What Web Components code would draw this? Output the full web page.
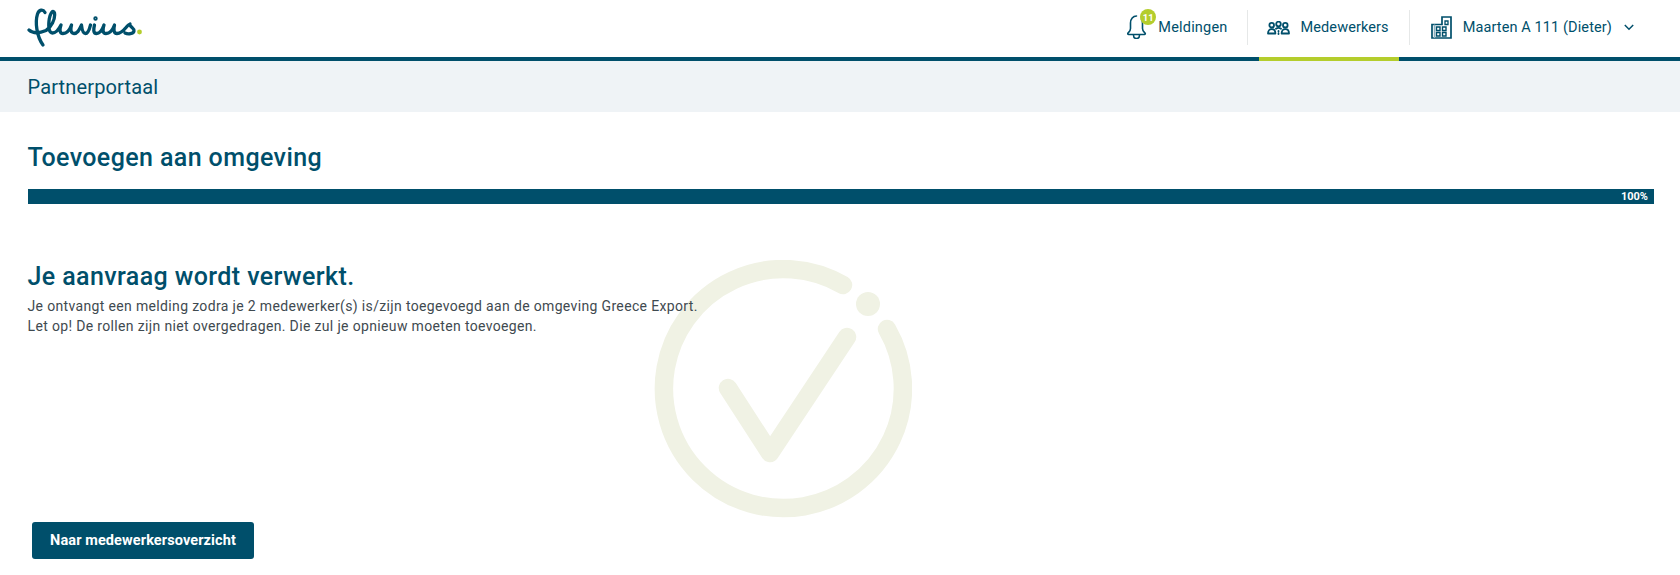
<!DOCTYPE html>
<html lang="nl"><head><meta charset="utf-8"><title>Partnerportaal</title>
<style>
html,body{margin:0;padding:0;background:#fff}
body{font-family:Roboto,"Liberation Sans",sans-serif;color:#3f4a50;height:575px;overflow:hidden;display:flex;flex-direction:column}
</style></head><body>
<fl-header>
  <fl-nav-item icon="bell" badge="11" class="first">Meldingen</fl-nav-item>
  <fl-nav-sep></fl-nav-sep>
  <fl-nav-item icon="people" active>Medewerkers</fl-nav-item>
  <fl-nav-sep></fl-nav-sep>
  <fl-nav-item icon="building" chevron>Maarten A 111 (Dieter)</fl-nav-item>
</fl-header>
<fl-subheader>Partnerportaal</fl-subheader>
<fl-page heading="Toevoegen aan omgeving">
  <fl-progress value="100"></fl-progress>
  <fl-result heading="Je aanvraag wordt verwerkt.">
    Je ontvangt een melding zodra je 2 medewerker(s) is/zijn toegevoegd aan de omgeving Greece Export.<br>
    Let op! De rollen zijn niet overgedragen. Die zul je opnieuw moeten toevoegen.
  </fl-result>
  <fl-button slot="actions">Naar medewerkersoverzicht</fl-button>
</fl-page>
<script>
const ICONS={
bell:`<svg width="20" height="24" viewBox="0 0 20 24" fill="none" stroke="#004f6b" stroke-width="1.600" stroke-linejoin="round" stroke-linecap="round"><path d="M9.500 1C6 1 3.500 4 3.500 8v5.500c0 2.500-1.500 3.500-2.500 4.500-.6.6-.2 1.500.6 1.500h15.800c.8 0 1.200-.9.6-1.500-1-1-2.500-2-2.500-4.500V8c0-1.500-.3-3-1-4"/><path d="M6.500 20c0 2.500 1.500 3.500 3 3.500s3-1 3-3.500"/></svg>`,
people:`<svg width="23" height="14" viewBox="0 0 23 14" fill="none" stroke="#004f6b" stroke-width="1.800" stroke-linecap="round" stroke-linejoin="round"><circle cx="4.700" cy="4.200" r="2.300"/><circle cx="11.500" cy="3" r="2.300"/><circle cx="18.300" cy="4.200" r="2.300"/><path d="M1 12.500c0-2.800 1.500-4.300 3.700-4.300s3.700 1.500 3.700 4.300H1zM14.600 12.500c0-2.800 1.500-4.300 3.700-4.300s3.700 1.500 3.700 4.300h-7.400zM9 7.700c.7-.5 1.500-.8 2.500-.8s1.800.3 2.500.8"/><path d="M11.500 10v3" stroke-dasharray=".5 2"/></svg>`,
building:`<svg width="21" height="23" viewBox="0 0 21 23" fill="none" stroke="#004f6b" stroke-width="1.700"><path d="M1 8.500h10V1h9v21H1z"/><path d="M3.500 8.500V22" stroke="#8fb0bf" stroke-width="1.500"/><path d="M14 5h3v3.500h-3z" stroke-width="1.300"/><path d="M5.500 11h3.500v3.500H5.500zM11.500 11H15v3.500h-3.500zM5.500 16.500h3.500V20H5.500zM11.500 16.500H15V20h-3.500z" stroke-width="1.400"/></svg>`
};
class Base extends HTMLElement{
  constructor(){super();this.attachShadow({mode:'open'})}
}
customElements.define('fl-logo',class extends Base{connectedCallback(){this.shadowRoot.innerHTML=`<style>:host{display:block;width:116px;height:40px;line-height:0}</style>
<svg width="116" height="40" viewBox="27 8 116 40" fill="none" stroke="#004f6b" stroke-width="3.300" stroke-linecap="round" stroke-linejoin="round">
<path d="M45 12.500C43 9 39 9.500 37.500 14 35 22 36.500 36 43 45"/>
<path d="M29 30c4 3.500 10 3.500 17 .5 5-3 9.500-11 8.500-17.500-1-3.500-4.500-1-5.500 8-.7 6.500 0 12 3.500 12C56.500 33 59 29 61 25 59.500 29.500 59.500 33.500 63 33.500 67 33.500 70 29 71.500 25 70.500 29 70.500 33.500 74 33.500 78 33.500 79.500 29 81.500 25 82 28 82 33.500 85.500 33.500 88 33.500 89.500 29 90.500 25"/>
<path d="M94.500 25C93.500 29 93 33.500 96.500 33.500 100 33.500 102.500 29 104 25 102.500 29.500 102.500 33.500 106 33.500 110 33.500 113 29 114.500 25 113.500 29.500 113.500 33.500 117 33.500 121 33.500 124 30 126 27.500 127.500 25.500 128.500 24.500 130 24 129 26.500 134.500 28 134 31 133.500 34 128 34.500 125 33"/>
<circle cx="95.500" cy="18.500" r=".9" stroke-width="2.600"/>
<circle cx="139.500" cy="32" r="2.400" fill="#b4cd2c" stroke="none"/>
</svg>`}});
customElements.define('fl-header',class extends Base{connectedCallback(){this.shadowRoot.innerHTML=`<style>
:host{display:flex;align-items:stretch;justify-content:space-between;height:57px;border-bottom:4px solid #004f6b;padding-left:27px;flex:none}
.logo{display:flex;align-items:flex-start;padding-top:8px}
nav{display:flex;align-items:stretch;padding-right:46px}
</style><div class="logo"><fl-logo></fl-logo></div><nav><slot></slot></nav>`}});
customElements.define('fl-nav-sep',class extends Base{connectedCallback(){this.shadowRoot.innerHTML=`<style>
:host{display:block;flex:none;width:1px;height:35px;margin:10px 11px 0 10px;background:#e6e8e8}
</style>`}});
customElements.define('fl-nav-item',class extends Base{connectedCallback(){
 const b=this.getAttribute('badge'),c=this.hasAttribute('chevron');
 this.shadowRoot.innerHTML=`<style>
:host{display:flex;align-items:center;height:61px;box-sizing:border-box;padding:0 10px 7px 8px;font-size:14.500px;letter-spacing:.2px;color:#004f6b}
:host([active]){border-bottom:4px solid #b4cd2c;padding-bottom:3px;letter-spacing:.1px}
:host([chevron]){padding:0 0 7px 10px;letter-spacing:.11px}
:host(.first){padding:0 9px 7px 0}
.ic{position:relative;display:flex;margin-right:11px;margin-top:1px}
:host(.first) .ic{margin-top:0}
.badge{position:absolute;left:13px;top:-6px;width:16px;height:16px;border-radius:50%;background:#b4cd2c;color:#fff;font-size:9.500px;font-weight:700;display:flex;align-items:center;justify-content:center;letter-spacing:0}
.chev{margin-left:12px;display:flex}
</style><span class="ic">${ICONS[this.getAttribute('icon')]}${b?`<span class="badge">${b}</span>`:''}</span><slot></slot>${c?`<span class="chev"><svg width="10" height="7" viewBox="0 0 10 7" fill="none" stroke="#004f6b" stroke-width="1.500"><path d="M.8 1l4.200 4.200L9.200 1"/></svg></span>`:''}`}});
customElements.define('fl-subheader',class extends Base{connectedCallback(){this.shadowRoot.innerHTML=`<style>
:host{display:flex;align-items:center;height:51px;padding-left:27.500px;background:#eff3f6;color:#004f6b;font-size:20px;letter-spacing:.15px;flex:none}
</style><slot></slot>`}});
customElements.define('fl-check',class extends Base{connectedCallback(){this.shadowRoot.innerHTML=`<style>
:host{position:absolute;left:654px;top:148px;width:258px;height:258px;line-height:0;z-index:0}
</style><svg width="258" height="258" viewBox="654 260 258 258" fill="none" stroke="#f0f2e4" stroke-width="18.500" stroke-linecap="round" stroke-linejoin="round"><path d="M843 285A119.500 119.500 0 1 0 887 329"/><path d="M728 388L770 453 847 337"/><circle cx="868" cy="304" r="12" fill="#f0f2e4" stroke="none"/></svg>`}});
customElements.define('fl-page',class extends Base{connectedCallback(){this.shadowRoot.innerHTML=`<style>
:host{display:flex;flex-direction:column;flex:1;position:relative;padding:0 26px 16px 28px;box-sizing:border-box}
h1{margin:30px 0 15px -.5px;font-size:25px;line-height:32px;font-weight:500;color:#004f6b;letter-spacing:.4px}
.main{flex:1;display:flex;flex-direction:column}
.actions{padding-left:4px}
</style><fl-check></fl-check><h1>${this.getAttribute('heading')}</h1><div class="main"><slot></slot></div><div class="actions"><slot name="actions"></slot></div>`}});
customElements.define('fl-progress',class extends Base{connectedCallback(){const v=this.getAttribute('value');this.shadowRoot.innerHTML=`<style>
:host{display:block;height:15px;background:#e6e8e8}
.bar{height:100%;width:${v}%;background:#004f6b;color:#fff;font-size:11px;font-weight:700;line-height:16px;text-align:right;padding-right:6px;box-sizing:border-box}
</style><div class="bar">${v}%</div>`}});
customElements.define('fl-result',class extends Base{connectedCallback(){this.shadowRoot.innerHTML=`<style>
:host{display:block;position:relative;z-index:1;margin-top:57px}
h2{margin:0 0 3px -.5px;font-size:25px;line-height:32px;font-weight:500;color:#004f6b;letter-spacing:.4px}
p{margin:0 0 0 -.5px;font-size:14px;line-height:20px;color:#3f4a50;letter-spacing:.345px}
</style><h2>${this.getAttribute('heading')}</h2><p><slot></slot></p>`}});
customElements.define('fl-button',class extends Base{connectedCallback(){this.shadowRoot.innerHTML=`<style>
:host{display:inline-flex;align-items:center;justify-content:center;width:222px;height:37px;background:#004f6b;color:#fff;border-radius:3px;font-size:14.500px;letter-spacing:.1px;font-weight:700;position:relative;z-index:1}
</style><slot></slot>`}});
</script>
</body></html>
